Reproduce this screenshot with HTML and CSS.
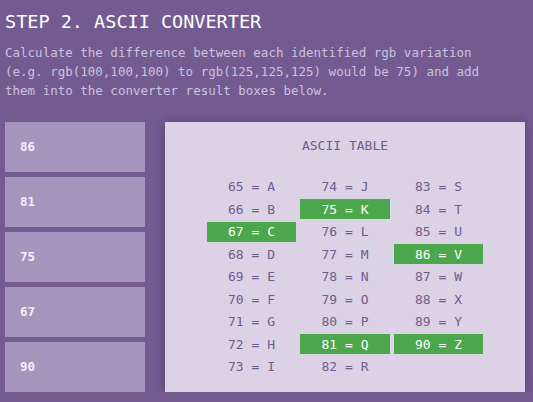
FILE: index.html
```html
<!DOCTYPE html>
<html>
<head>
<meta charset="utf-8">
<link rel="stylesheet" href="styles.css">
</head>
<body>
<div class="page">
  <h1 class="title">STEP 2. ASCII CONVERTER</h1>
  <p class="desc">Calculate the difference between each identified rgb variation (e.g. rgb(100,100,100) to rgb(125,125,125) would be 75) and add them into the converter result boxes below.</p>
  <div class="main">
    <div class="results">
      <div class="box">86</div>
      <div class="box">81</div>
      <div class="box">75</div>
      <div class="box">67</div>
      <div class="box">90</div>
    </div>
    <div class="panel">
      <div class="panel-title">ASCII TABLE</div>
      <div class="grid">
        <div class="cell">65 = A</div><div class="cell">74 = J</div><div class="cell">83 = S</div>
        <div class="cell">66 = B</div><div class="cell hl">75 = K</div><div class="cell">84 = T</div>
        <div class="cell hl">67 = C</div><div class="cell">76 = L</div><div class="cell">85 = U</div>
        <div class="cell">68 = D</div><div class="cell">77 = M</div><div class="cell hl">86 = V</div>
        <div class="cell">69 = E</div><div class="cell">78 = N</div><div class="cell">87 = W</div>
        <div class="cell">70 = F</div><div class="cell">79 = O</div><div class="cell">88 = X</div>
        <div class="cell">71 = G</div><div class="cell">80 = P</div><div class="cell">89 = Y</div>
        <div class="cell">72 = H</div><div class="cell hl">81 = Q</div><div class="cell hl">90 = Z</div>
        <div class="cell">73 = I</div><div class="cell">82 = R</div><div class="cell"></div>
      </div>
    </div>
  </div>
</div>
</body>
</html>
```
FILE: styles.css
```css
html, body {
  margin: 0;
  padding: 0;
  background: #735b91;
  font-family: "DejaVu Sans Mono", "Liberation Mono", monospace;
}
.page {
  padding: 11px 8px 0 5px;
}
.title {
  margin: 0;
  font-size: 18.5px;
  line-height: 22px;
  font-weight: normal;
  color: #ffffff;
}
.desc {
  margin: 10px 0 0 0;
  font-size: 12.5px;
  line-height: 19px;
  color: #cdc1de;
  width: 480px;
}
.main {
  display: flex;
  gap: 20px;
  margin-top: 22px;
}
.results {
  width: 140px;
  display: flex;
  flex-direction: column;
  gap: 5px;
}
.box {
  height: 50px;
  background: #a594bc;
  color: #f4f0f8;
  font-size: 12.5px;
  font-weight: bold;
  display: flex;
  align-items: center;
  padding-left: 15px;
  padding-bottom: 2px;
  box-sizing: border-box;
}
.panel {
  width: 360px;
  height: 270px;
  background: #dbd3e5;
  box-shadow: 0 0 10px rgba(40, 20, 70, 0.35);
  padding-top: 14px;
  box-sizing: border-box;
}
.panel-title {
  text-align: center;
  font-size: 13px;
  line-height: 20px;
  color: #6e5d8d;
}
.grid {
  margin-top: 20.5px;
  display: grid;
  grid-template-columns: 89px 90px 89px;
  grid-auto-rows: 20px;
  column-gap: 4px;
  row-gap: 2.5px;
  justify-content: center;
}
.cell {
  font-size: 13px;
  color: #6e5d8d;
  display: flex;
  align-items: center;
  justify-content: center;
  white-space: pre;
}
.cell.hl {
  background: #4ca64c;
  color: #ffffff;
}
```
